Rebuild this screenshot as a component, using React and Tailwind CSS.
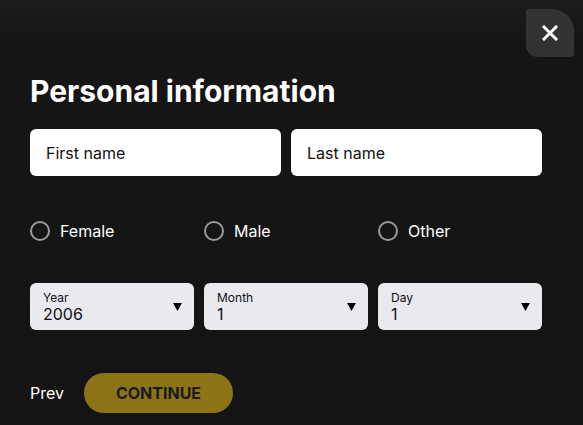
export default function App() {
  const font = { fontFamily: "Inter, 'Noto Sans', sans-serif" };
  const Radio = ({ label }) => (
    <label className="flex items-center gap-[10px] text-white text-[16px]">
      <span className="w-[20px] h-[20px] rounded-full border-2 border-[#9a9a9a]" />
      {label}
    </label>
  );
  const Select = ({ label, value }) => (
    <div className="relative h-[47px] rounded-[6px] bg-[#e9e9ee] pl-[13px] pt-[8px]">
      <div className="text-[12px] leading-[14px] text-[#111]">{label}</div>
      <div className="text-[16px] leading-[18px] text-[#111]">{value}</div>
      <svg className="absolute right-[12px] top-[20px]" width="9" height="8" viewBox="0 0 10 9">
        <path d="M0 0 L10 0 L5 9 Z" fill="#000" />
      </svg>
    </div>
  );
  return (
    <div
      style={font}
      className="w-[583px] h-[425px] overflow-hidden bg-[linear-gradient(to_bottom,#1c1c1c_0px,#151515_40px,#141414_100%)] relative"
    >
      <button className="absolute left-[526px] top-[9px] w-[48px] h-[48px] bg-[#333333] rounded-tl-[2px] rounded-tr-[22px] rounded-br-[4px] rounded-bl-[12px] flex items-center justify-center">
        <svg width="16" height="16" viewBox="0 0 16 16">
          <path d="M2 2 L14 14 M14 2 L2 14" stroke="#fff" strokeWidth="3" strokeLinecap="square" />
        </svg>
      </button>
      <div className="px-[30px] pt-[73px] w-[572px]">
        <h1 className="text-white font-bold text-[30px] leading-[36px]">Personal information</h1>
        <div className="grid grid-cols-2 gap-[10px] mt-[20px]">
          <div className="h-[47px] bg-white rounded-[6px] flex items-center pl-[16px] text-[16px] text-[#111]">First name</div>
          <div className="h-[47px] bg-white rounded-[6px] flex items-center pl-[16px] text-[16px] text-[#111]">Last name</div>
        </div>
        <div className="grid grid-cols-3 gap-[10px] mt-[43px] h-[22px]">
          <Radio label="Female" />
          <Radio label="Male" />
          <Radio label="Other" />
        </div>
        <div className="grid grid-cols-3 gap-[10px] mt-[42px]">
          <Select label="Year" value="2006" />
          <Select label="Month" value="1" />
          <Select label="Day" value="1" />
        </div>
        <div className="flex items-center gap-[20px] mt-[43px]">
          <span className="text-white text-[16px]">Prev</span>
          <button className="h-[40px] w-[149px] rounded-full bg-[#8b7316] text-[#1a1a1a] font-bold text-[16px] uppercase">Continue</button>
        </div>
      </div>
    </div>
  );
}
